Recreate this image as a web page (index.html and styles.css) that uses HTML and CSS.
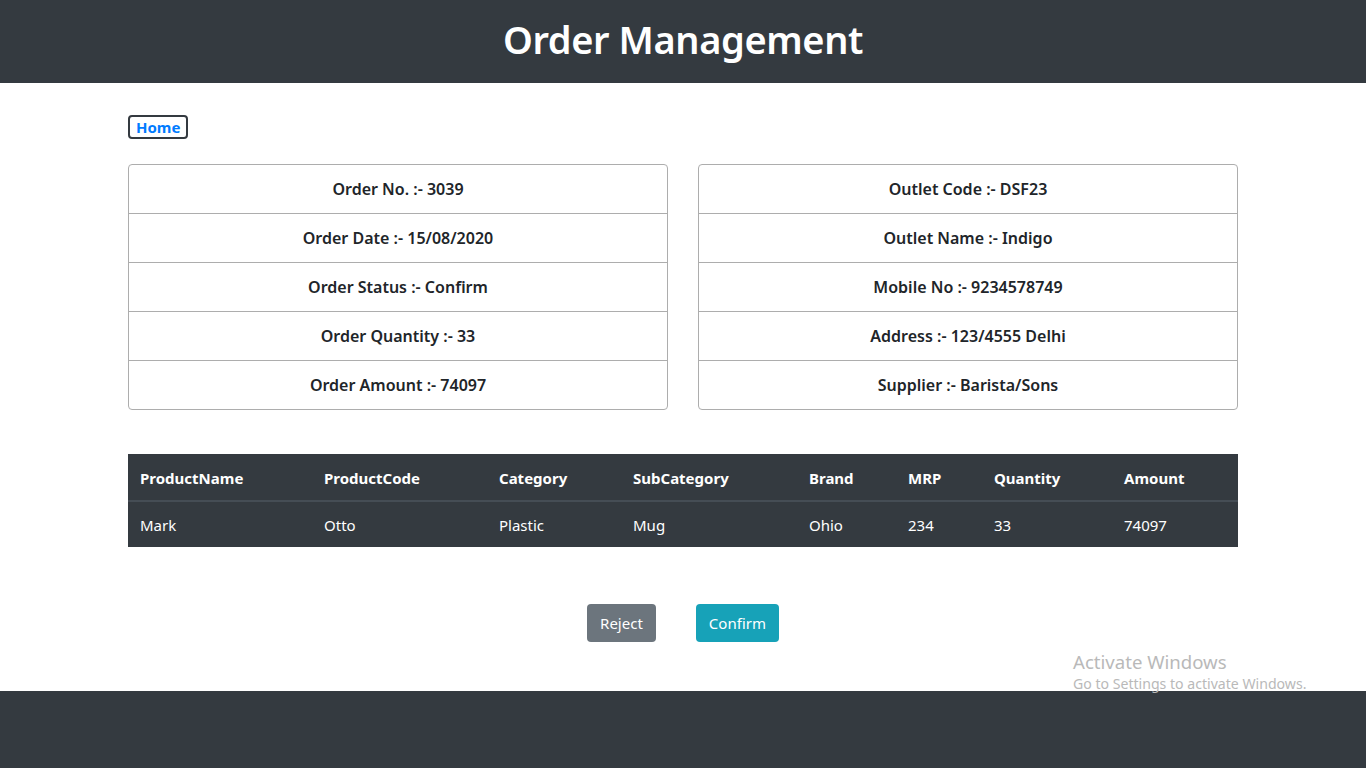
FILE: index.html
```html
<!DOCTYPE html>
<html lang="en">
<head>
<meta charset="utf-8">
<title>Order Management</title>
<link rel="stylesheet" href="styles.css">
</head>
<body>
<header class="topbar">
  <h1 class="title">Order Management</h1>
</header>
<main class="container">
  <div class="nav-row">
    <a class="home-btn" href="#">Home</a>
  </div>
  <div class="info-grid">
    <ul class="list-group">
      <li>Order No. :- 3039</li>
      <li>Order Date :- 15/08/2020</li>
      <li>Order Status :- Confirm</li>
      <li>Order Quantity :- 33</li>
      <li>Order Amount :- 74097</li>
    </ul>
    <ul class="list-group">
      <li>Outlet Code :- DSF23</li>
      <li>Outlet Name :- Indigo</li>
      <li>Mobile No :- 9234578749</li>
      <li>Address :- 123/4555 Delhi</li>
      <li>Supplier :- Barista/Sons</li>
    </ul>
  </div>
  <table class="products">
    <colgroup>
      <col class="c1"><col class="c2"><col class="c3"><col class="c4">
      <col class="c5"><col class="c6"><col class="c7"><col class="c8">
    </colgroup>
    <thead>
      <tr>
        <th>ProductName</th><th>ProductCode</th><th>Category</th><th>SubCategory</th>
        <th>Brand</th><th>MRP</th><th>Quantity</th><th>Amount</th>
      </tr>
    </thead>
    <tbody>
      <tr>
        <td>Mark</td><td>Otto</td><td>Plastic</td><td>Mug</td>
        <td>Ohio</td><td>234</td><td>33</td><td>74097</td>
      </tr>
    </tbody>
  </table>
  <div class="actions">
    <button class="btn btn-reject">Reject</button>
    <button class="btn btn-confirm">Confirm</button>
  </div>
</main>
<footer class="footer"></footer>
<div class="watermark">
  <div class="wm-title">Activate Windows</div>
  <div class="wm-sub">Go to Settings to activate Windows.</div>
</div>
</body>
</html>
```

FILE: styles.css
```css
* { box-sizing: border-box; }
html, body { margin: 0; padding: 0; }
body {
  font-family: "Noto Sans", "Open Sans", "DejaVu Sans", sans-serif;
  font-size: 16px;
  line-height: 1.5;
  color: #212529;
  background: #fff;
  min-height: 768px;
  display: flex;
  flex-direction: column;
}
.topbar {
  background: #343a40;
  height: 83px;
  padding-bottom: 6px;
  display: flex;
  align-items: center;
  justify-content: center;
}
.title {
  margin: 0;
  color: #fff;
  font-size: 38px;
  font-weight: 600;
  line-height: 48px;
  letter-spacing: -0.4px;
}
.container {
  width: 1110px;
  margin: 0 auto;
  padding-top: 32px;
  padding-bottom: 49px;
}
.nav-row { display: flex; }
.home-btn {
  display: inline-block;
  border: 2px solid #343a40;
  border-radius: 4px;
  padding: 0 6px;
  height: 24px;
  line-height: 20px;
  color: #007bff;
  font-weight: 700;
  font-size: 15px;
  text-decoration: none;
}
.info-grid {
  margin-top: 25px;
  display: grid;
  grid-template-columns: 540px 540px;
  column-gap: 30px;
}
.list-group {
  list-style: none;
  margin: 0;
  padding: 0;
  border: 1px solid #adadad;
  border-radius: 4px;
}
.list-group li {
  padding: 12px 20px;
  height: 49px;
  line-height: 24px;
  text-align: center;
  font-weight: 600;
  font-size: 16px;
  border-top: 1px solid #adadad;
}
.list-group li:first-child { border-top: 0; height: 48px; }
.products {
  margin-top: 44px;
  width: 1110px;
  border-collapse: collapse;
  background: #343a40;
  color: #fff;
  table-layout: fixed;
}
.c1 { width: 184px; } .c2 { width: 175px; } .c3 { width: 134px; } .c4 { width: 176px; }
.c5 { width: 99px; } .c6 { width: 86px; } .c7 { width: 130px; } .c8 { width: 126px; }
.products th, .products td {
  text-align: left;
  padding: 11px 12px;
  line-height: 24px;
  font-size: 15px;
}
.products th {
  font-weight: 700;
  padding-top: 12px;
  padding-bottom: 10px;
  border-bottom: 2px solid #454d55;
}
.products td { font-weight: 400; padding-bottom: 10px; }
.actions {
  margin-top: 57px;
  display: flex;
  justify-content: center;
  gap: 40px;
}
.btn {
  font-family: inherit;
  font-size: 15px;
  line-height: 24px;
  height: 38px;
  padding: 6px 13px;
  border: 0;
  border-radius: 4px;
  color: #fff;
  cursor: pointer;
}
.btn-reject { background: #6c757d; }
.btn-confirm { background: #17a2b8; }
.footer {
  flex: 1;
  background: #343a40;
}
.watermark {
  position: absolute;
  left: 1073px;
  top: 650px;
  color: #b9b9b9;
  pointer-events: none;
}
.wm-title { font-size: 18.6px; line-height: 24px; }
.wm-sub { font-size: 14.1px; line-height: 20px; }
```
